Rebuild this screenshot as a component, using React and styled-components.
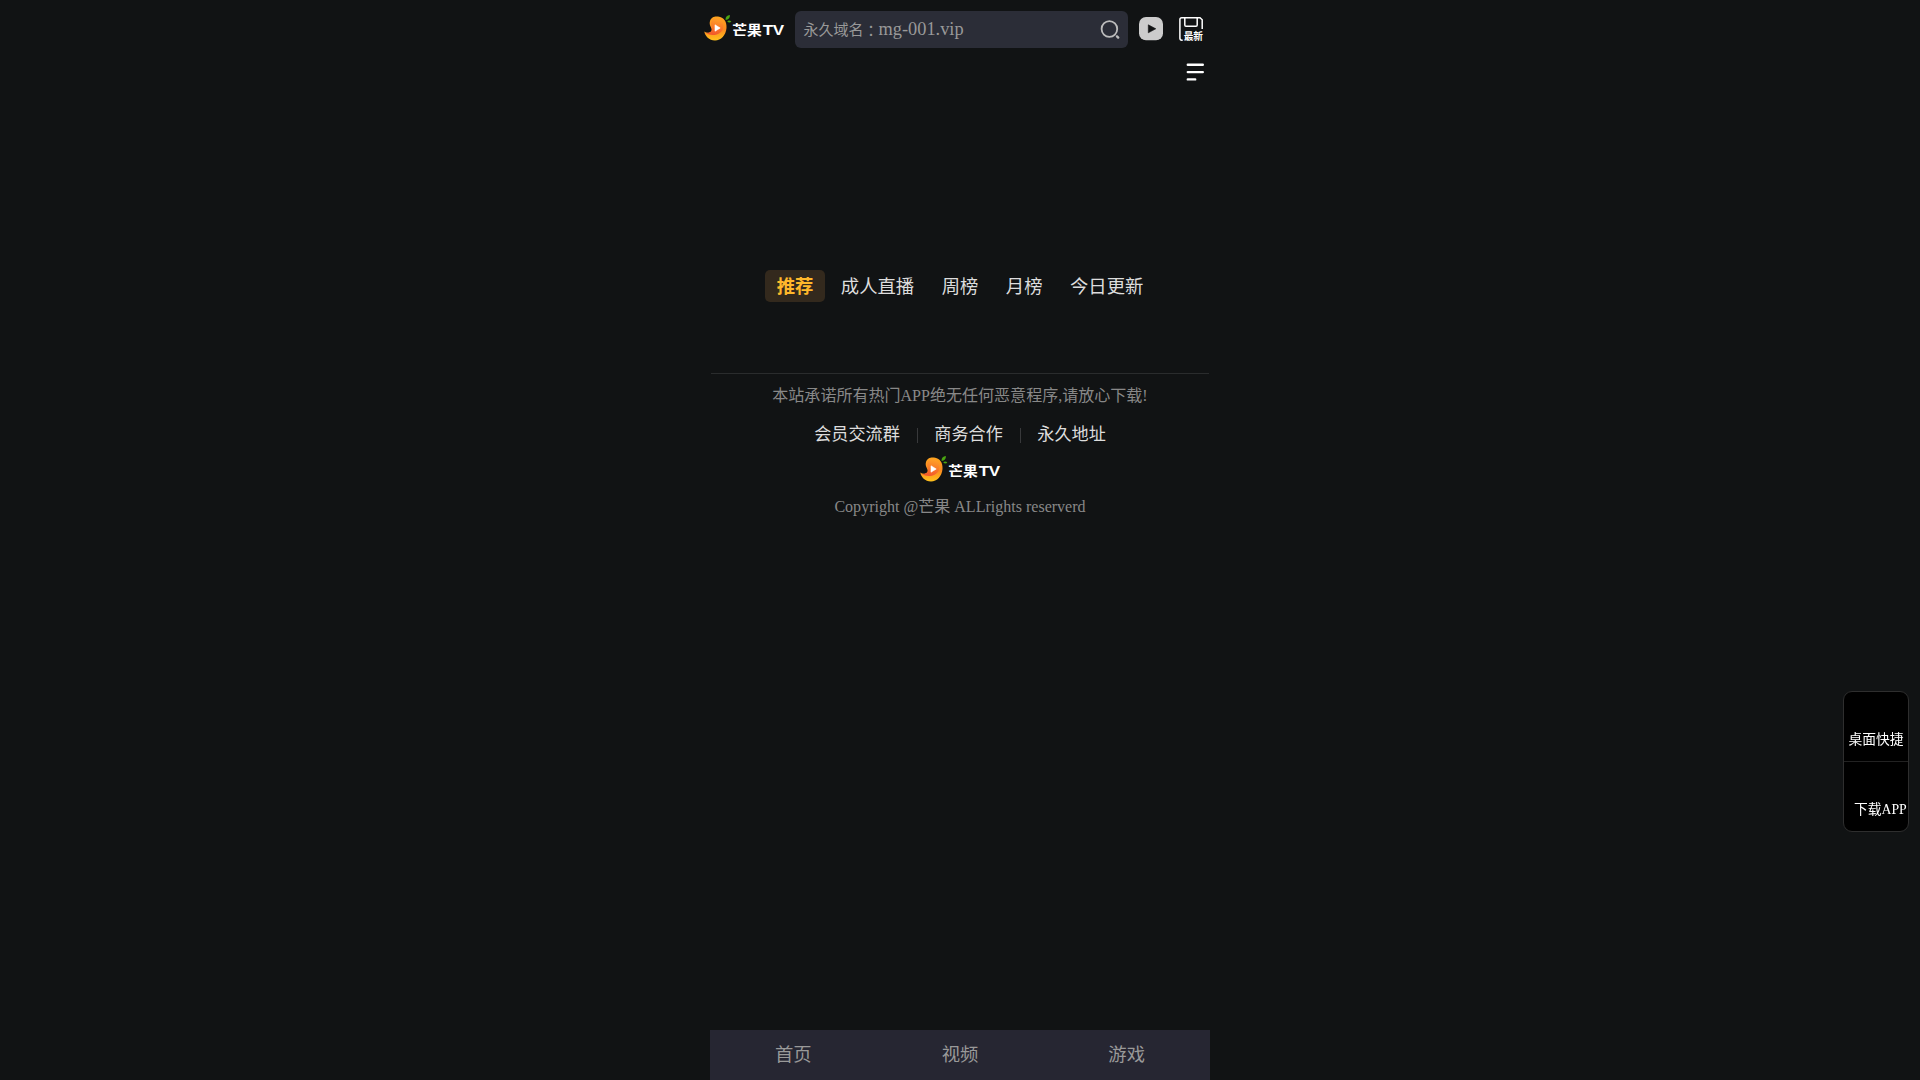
import React from "react";
import styled, { createGlobalStyle } from "styled-components";

const Global = createGlobalStyle`
  *{box-sizing:border-box}
  body{margin:0;background:#111314;color:#ddd;font-family:"Liberation Serif","Noto Sans CJK SC",serif;overflow:hidden}
`;
const Page = styled.div`width:500px;height:100vh;margin:0 auto;display:flex;flex-direction:column;`;
const Header = styled.header`height:58px;margin:0 0 0 -8px;display:flex;align-items:flex-start;padding-top:11px;`;
const HeaderLogo = styled.div`width:93px;height:37px;padding:2px 0 0 1px;`;
const LogoSvg = styled.svg`display:block;width:84px;height:30px;`;
const Search = styled.div`width:333px;height:37px;border-radius:6px;background:#2b2d37;color:#999;display:flex;align-items:center;padding:0 8px 0 8.5px;`;
const SearchText = styled.div`font-size:15px;line-height:37px;white-space:nowrap;flex:1;display:flex;align-items:baseline;`;
const Colon = styled.span`font-family:"Noto Sans CJK TC",sans-serif;line-height:1;transform:translateY(1px);`;
const Domain = styled.span`font-size:18.33px;`;
const Glyph = styled.svg`display:block;flex:none;width:${p => p.$w}px;height:${p => p.$h}px;margin:${p => p.$m || 0};`;
const MenuRow = styled.div`display:flex;justify-content:flex-end;padding:4px 6px 0 0;height:212px;`;
const Tabs = styled.nav`display:flex;justify-content:center;gap:4.1px;height:103px;`;
const Tab = styled.a`height:32px;line-height:34px;padding:0 11.67px;font-size:18.36px;border-radius:5px;white-space:nowrap;
  color:${p => p.$on ? "#ffb82b" : "#ddd"};background:${p => p.$on ? "#33291d" : "transparent"};font-weight:${p => p.$on ? 700 : 400};`;
const Footer = styled.footer`margin:0 1px;border-top:1px solid #2a2c2d;display:flex;flex-direction:column;align-items:center;`;
const Note = styled.p`margin:0;font-size:16.04px;line-height:24px;color:#888;white-space:nowrap;padding-top:${p => p.$top}px;`;
const Links = styled.div`display:flex;align-items:center;height:26px;margin-top:14px;`;
const Link = styled.a`font-size:17.15px;line-height:26px;color:#ddd;`;
const Bar = styled.span`width:1px;height:15px;background:#38393b;margin:0 16.3px 0 17.1px;`;
const FooterLogo = styled.div`height:30px;margin:6px 0 0 2px;`;
const Bottom = styled.nav`margin-top:auto;height:50px;background:#262632;display:flex;`;
const BottomItem = styled.a`flex:1;text-align:center;color:#999;font-size:18.33px;line-height:50px;`;
const Side = styled.aside`position:fixed;left:1843px;top:691px;width:66px;height:141px;border:1px solid #2e2e2e;border-radius:9px;background:#000;color:#fff;font-size:13.75px;`;
const SideItem = styled.a`display:block;height:69px;line-height:20px;padding-top:38px;white-space:nowrap;padding-left:${p => p.$left}px;
  & + &{height:70px;border-top:1px solid #222;}`;

function Logo({ id }) {
  return (
    <LogoSvg viewBox="0 0 84 30">
      <defs>
        <linearGradient id={id + "a"} x1="0" y1="0" x2="0" y2="1"><stop stopColor="#ffa51f" /><stop offset=".55" stopColor="#fb8b20" /><stop offset="1" stopColor="#ffc21c" /></linearGradient>
        <linearGradient id={id + "b"} x1="0.6" y1="0" x2="0.4" y2="1"><stop stopColor="#ffa126" /><stop offset="1" stopColor="#f2562b" /></linearGradient>
      </defs>
      <path d="M7 8C8 4 12 3 15 3.5C21 4 24 9 23.5 15C23 22 18 27.5 12 27.5C6 27.5 2 23 1.3 18.5C4 20.5 7 20 8.5 18C9.8 15 5.5 13 7 8Z" fill={`url(#${id}a)`} />
      <path d="M8.5 8C10 4.5 15 4 18 7C22 11 21 18 16 20.5C11 23 6 22 3 20C7 20 9 18.5 9 16C9 13 7.4 11 8.5 8Z" fill={`url(#${id}b)`} />
      <path d="M12 11.8L17.2 15L12 18.2Z" fill="#fff" stroke="#fff" strokeWidth=".6" strokeLinejoin="round" />
      <path d="M22.6 6.9C22.2 4 24 2.4 26.9 2C27.1 5 25.5 6.9 22.6 6.9ZM24.2 8.2C25.6 7.2 27.4 7.4 28.4 8.8C26.8 10 25.3 9.7 24.2 8.2Z" fill="#4aa412" />
      <g fill="#fff" fontWeight="700">
        <text transform="translate(29.3 21.6) scale(1.13 1)" fontFamily="Noto Sans CJK SC, sans-serif" fontSize="13.1">芒果</text>
        <text transform="translate(59.7 21.6) scale(1.15 1)" fontFamily="Liberation Sans, sans-serif" fontSize="14.8" letterSpacing="-.3">TV</text>
      </g>
    </LogoSvg>
  );
}

const tabs = ["推荐", "成人直播", "周榜", "月榜", "今日更新"];

export default function App() {
  return (
    <>
      <Global />
      <Page>
        <Header>
          <HeaderLogo><Logo id="top" /></HeaderLogo>
          <Search>
            <SearchText>永久域名<Colon lang="zh-TW">：</Colon><Domain>mg-001.vip</Domain></SearchText>
            <Glyph $w={20} $h={20} viewBox="0 0 20 20" fill="none" stroke="#bcbcbc" strokeWidth="1.8" strokeLinecap="round">
              <circle cx="9.4" cy="9" r="7.8" /><path d="M17 16.4L18.2 17.6" strokeWidth="2.4" />
            </Glyph>
          </Search>
          <Glyph $w={24} $h={24} $m="6px 0 0 11px" viewBox="0 0 24 24">
            <rect width="24" height="23.2" rx="7" fill="#ccc" /><path d="M9.3 7.8V15.8L16.8 11.8Z" fill="#111314" stroke="#111314" strokeWidth=".6" strokeLinejoin="round" />
          </Glyph>
          <Glyph $w={26} $h={26} $m="5px 0 0 15px" viewBox="0 0 26 26">
            <path d="M4.7 24.2H3.8Q1.9 24.2 1.9 22.3V3.6Q1.9 1.8 3.7 1.8H22L24.2 3.8V13M6.8 2V9Q6.8 10.3 8 10.3H18Q19.2 10.3 19.2 9V2" fill="none" stroke="#fff" strokeWidth="1.5" />
            <text x="5.7" y="23.8" fill="#fff" fontFamily="Noto Sans CJK SC, sans-serif" fontWeight="700" fontSize="9.7">最新</text>
          </Glyph>
        </Header>
        <MenuRow>
          <Glyph $w={18} $h={20} viewBox="0 0 18 20" fill="none" stroke="#fff" strokeWidth="2.4" strokeLinecap="round">
            <path d="M1.8 2.8H16.8M1.8 10.1H16.8M1.8 17.4H9.2" />
          </Glyph>
        </MenuRow>
        <Tabs>{tabs.map((t, i) => <Tab key={t} $on={i === 0}>{t}</Tab>)}</Tabs>
        <Footer>
          <Note $top={10}>本站承诺所有热门APP绝无任何恶意程序,请放心下载!</Note>
          <Links><Link>会员交流群</Link><Bar /><Link>商务合作</Link><Bar /><Link>永久地址</Link></Links>
          <FooterLogo><Logo id="foot" /></FooterLogo>
          <Note $top={11}>Copyright @芒果 ALLrights reserverd</Note>
        </Footer>
        <Bottom>
          <BottomItem>首页</BottomItem><BottomItem>视频</BottomItem><BottomItem>游戏</BottomItem>
        </Bottom>
      </Page>
      <Side><SideItem $left={4.5}>桌面快捷</SideItem><SideItem $left={10}>下载APP</SideItem></Side>
    </>
  );
}
